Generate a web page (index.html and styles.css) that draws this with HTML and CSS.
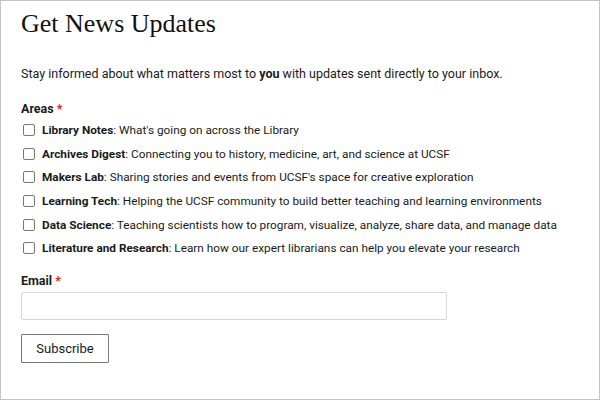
FILE: index.html
```html
<!DOCTYPE html>
<html>
<head>
<meta charset="utf-8">
<link rel="stylesheet" href="styles.css">
</head>
<body>
<div class="frame">
  <h1 class="title">Get News Updates</h1>
  <p class="intro">Stay informed about what matters most to <b>you</b> with updates sent directly to your inbox.</p>
  <div class="field">
    <div class="label">Areas <span class="req">*</span></div>
    <ul class="options">
      <li><span class="box"></span><span><b>Library Notes</b>: What's going on across the Library</span></li>
      <li><span class="box"></span><span><b>Archives Digest</b>: Connecting you to history, medicine, art, and science at UCSF</span></li>
      <li><span class="box"></span><span><b>Makers Lab</b>: Sharing stories and events from UCSF's space for creative exploration</span></li>
      <li><span class="box"></span><span><b>Learning Tech</b>: Helping the UCSF community to build better teaching and learning environments</span></li>
      <li><span class="box"></span><span><b>Data Science</b>: Teaching scientists how to program, visualize, analyze, share data, and manage data</span></li>
      <li><span class="box"></span><span><b>Literature and Research</b>: Learn how our expert librarians can help you elevate your research</span></li>
    </ul>
  </div>
  <div class="field email">
    <div class="label">Email <span class="req">*</span></div>
    <div class="input"></div>
  </div>
  <div class="button">Subscribe</div>
</div>
</body>
</html>
```
FILE: styles.css
```css
html, body { margin: 0; padding: 0; background: #fff; }
.frame {
  width: 600px; height: 400px; box-sizing: border-box;
  border: 1px solid #c4c4c4;
  padding: 0 20px;
  font-family: Roboto, "Liberation Sans", sans-serif;
  color: #1a1a1a;
  font-size: 12.5px;
}
.title {
  font-family: "Liberation Serif", serif;
  font-weight: normal;
  font-size: 26px;
  margin: 0;
  padding-top: 7px;
  line-height: 32px;
  color: #111;
}
.intro { margin: 25px 0 0; line-height: 18px; }
.intro b { font-weight: bold; }
.field { margin-top: 17px; }
.label { font-weight: bold; line-height: 17px; }
.req { color: #e0201c; }
.options { list-style: none; margin: 1px 0 0; padding: 0; white-space: nowrap; font-size: 11.8px; }
.options li { display: flex; align-items: center; height: 23.7px; }
.options b { font-weight: bold; }
.box {
  width: 10px; height: 10px; border: 1px solid #777; border-radius: 2px;
  margin: 0 7px 0 2px; flex: none; background: #fff;
}
.email { margin-top: 12px; }
.input {
  margin-top: 3px;
  width: 426px; height: 28px; box-sizing: border-box;
  border: 1px solid #d8d8d8; border-radius: 2px;
}
.button {
  margin-top: 14px;
  width: 88px; height: 29px; box-sizing: border-box;
  border: 1px solid #777; border-radius: 1px;
  display: flex; align-items: center; justify-content: center;
  font-size: 13px;
}
```
